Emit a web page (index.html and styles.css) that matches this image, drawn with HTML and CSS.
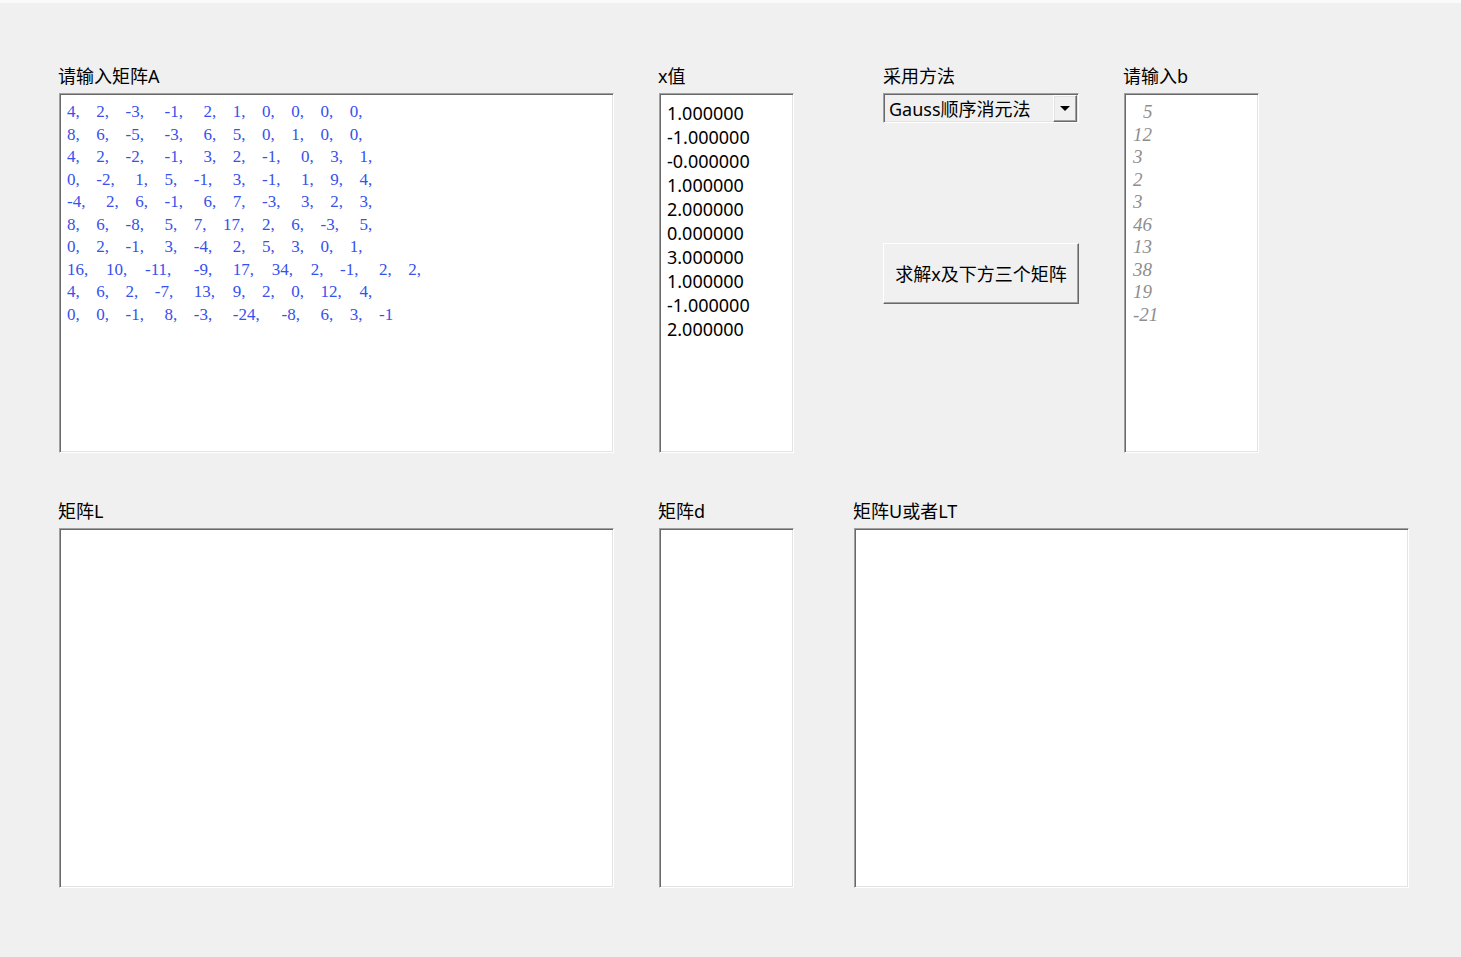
FILE: index.html
```html
<!DOCTYPE html>
<html lang="zh-CN">
<head>
<meta charset="utf-8">
<title>矩阵求解</title>
<link rel="stylesheet" href="styles.css">
</head>
<body>
<div class="row row-top">
  <div class="col col-a">
    <div class="label">请输入矩阵A</div>
    <div class="box box-a mat">
      <div class="mat-row"><span class="t3">4,</span><span class="t3">2,</span><span class="t4">-3,</span><span class="t4">-1,</span><span class="t3">2,</span><span class="t3">1,</span><span class="t3">0,</span><span class="t3">0,</span><span class="t3">0,</span><span class="t3">0,</span></div>
      <div class="mat-row"><span class="t3">8,</span><span class="t3">6,</span><span class="t4">-5,</span><span class="t4">-3,</span><span class="t3">6,</span><span class="t3">5,</span><span class="t3">0,</span><span class="t3">1,</span><span class="t3">0,</span><span class="t3">0,</span></div>
      <div class="mat-row"><span class="t3">4,</span><span class="t3">2,</span><span class="t4">-2,</span><span class="t4">-1,</span><span class="t3">3,</span><span class="t3">2,</span><span class="t4">-1,</span><span class="t3">0,</span><span class="t3">3,</span><span class="t3">1,</span></div>
      <div class="mat-row"><span class="t3">0,</span><span class="t4">-2,</span><span class="t3">1,</span><span class="t3">5,</span><span class="t4">-1,</span><span class="t3">3,</span><span class="t4">-1,</span><span class="t3">1,</span><span class="t3">9,</span><span class="t3">4,</span></div>
      <div class="mat-row"><span class="t4">-4,</span><span class="t3">2,</span><span class="t3">6,</span><span class="t4">-1,</span><span class="t3">6,</span><span class="t3">7,</span><span class="t4">-3,</span><span class="t3">3,</span><span class="t3">2,</span><span class="t3">3,</span></div>
      <div class="mat-row"><span class="t3">8,</span><span class="t3">6,</span><span class="t4">-8,</span><span class="t3">5,</span><span class="t3">7,</span><span class="t4">17,</span><span class="t3">2,</span><span class="t3">6,</span><span class="t4">-3,</span><span class="t3">5,</span></div>
      <div class="mat-row"><span class="t3">0,</span><span class="t3">2,</span><span class="t4">-1,</span><span class="t3">3,</span><span class="t4">-4,</span><span class="t3">2,</span><span class="t3">5,</span><span class="t3">3,</span><span class="t3">0,</span><span class="t3">1,</span></div>
      <div class="mat-row"><span class="t4">16,</span><span class="t4">10,</span><span class="t5">-11,</span><span class="t4">-9,</span><span class="t4">17,</span><span class="t4">34,</span><span class="t3">2,</span><span class="t4">-1,</span><span class="t3">2,</span><span class="t3">2,</span></div>
      <div class="mat-row"><span class="t3">4,</span><span class="t3">6,</span><span class="t3">2,</span><span class="t4">-7,</span><span class="t4">13,</span><span class="t3">9,</span><span class="t3">2,</span><span class="t3">0,</span><span class="t4">12,</span><span class="t3">4,</span></div>
      <div class="mat-row"><span class="t3">0,</span><span class="t3">0,</span><span class="t4">-1,</span><span class="t3">8,</span><span class="t4">-3,</span><span class="t5">-24,</span><span class="t4">-8,</span><span class="t3">6,</span><span class="t3">3,</span><span class="t3">-1</span></div>
    </div>
  </div>
  <div class="col col-x">
    <div class="label">x值</div>
    <div class="box box-narrow xvals">
      <div>1.000000</div>
      <div>-1.000000</div>
      <div>-0.000000</div>
      <div>1.000000</div>
      <div>2.000000</div>
      <div>0.000000</div>
      <div>3.000000</div>
      <div>1.000000</div>
      <div>-1.000000</div>
      <div>2.000000</div>
    </div>
  </div>
  <div class="col col-m">
    <div class="label">采用方法</div>
    <div class="select">
      <span class="select-text">Gauss顺序消元法</span>
      <span class="select-arrow"></span>
    </div>
    <button class="btn" type="button">求解x及下方三个矩阵</button>
  </div>
  <div class="col col-b">
    <div class="label">请输入b</div>
    <div class="box box-narrow bvals">
      <div class="indent">5</div>
      <div>12</div>
      <div>3</div>
      <div>2</div>
      <div>3</div>
      <div>46</div>
      <div>13</div>
      <div>38</div>
      <div>19</div>
      <div>-21</div>
    </div>
  </div>
</div>
<div class="row row-bottom">
  <div class="col col-a">
    <div class="label">矩阵L</div>
    <div class="box box-a"></div>
  </div>
  <div class="col col-x">
    <div class="label">矩阵d</div>
    <div class="box box-narrow"></div>
  </div>
  <div class="col col-u">
    <div class="label">矩阵U或者LT</div>
    <div class="box box-a"></div>
  </div>
</div>
</body>
</html>
```

FILE: styles.css
```css
* {
  box-sizing: border-box;
}

html,
body {
  margin: 0;
}

body {
  width: 1461px;
  height: 957px;
  overflow: hidden;
  background: #f0f0f0;
  border-top: 3px solid #fafafa;
  padding: 61px 0 0 58px;
  font-family: "Noto Sans", "Noto Sans CJK SC", sans-serif;
  color: #000;
}

.row {
  display: flex;
  align-items: flex-start;
}

.row-bottom {
  margin-top: 46px;
}

.col {
  flex-shrink: 0;
}

.col-a {
  width: 556px;
}

.col-x {
  width: 136px;
  margin-left: 44px;
}

.col-m {
  width: 196px;
  margin-left: 89px;
  display: flex;
  flex-direction: column;
}

.col-b {
  width: 136px;
  margin-left: 44px;
}

.col-u {
  width: 556px;
  margin-left: 59px;
}

.label {
  font-size: 18px;
  line-height: 24px;
  height: 24px;
  margin-bottom: 5px;
  white-space: nowrap;
}

.box {
  margin-left: 1px;
  height: 360px;
  background: #fff;
  border: 1px solid;
  border-color: #a0a0a0 #fff #fff #a0a0a0;
  box-shadow: inset 1px 1px 0 #696969, inset -1px -1px 0 #e3e3e3;
  padding: 7px 6px 0 7px;
  overflow: hidden;
}

.box-a {
  width: 555px;
}

.box-narrow {
  width: 135px;
}

.mat {
  font-family: "Liberation Serif", serif;
  font-size: 17px;
  line-height: 22.5px;
  color: #3651ee;
}

.mat-row {
  display: flex;
  white-space: nowrap;
}

.mat-row span {
  flex-shrink: 0;
}

.t3 {
  width: 29.25px;
}

.t4 {
  width: 39px;
}

.t5 {
  width: 48.75px;
}

.xvals {
  font-family: "Noto Sans", sans-serif;
  font-size: 18px;
  line-height: 24px;
  color: #000;
}

.bvals {
  font-family: "Liberation Serif", serif;
  font-style: italic;
  font-size: 19px;
  line-height: 22.5px;
  color: #8e8e8e;
  padding-left: 8px;
}

.indent {
  padding-left: 10px;
}

.select {
  width: 196px;
  height: 30px;
  border: 1px solid;
  border-color: #a0a0a0 #fff #fff #a0a0a0;
  box-shadow: inset 1px 1px 0 #696969, inset -1px -1px 0 #e3e3e3;
  display: flex;
  align-items: center;
  justify-content: space-between;
  padding: 1px 1px 0 5px;
  font-size: 18px;
  line-height: 24px;
  white-space: nowrap;
}

.select-arrow {
  width: 24px;
  height: 27px;
  background: #f0f0f0;
  border: 1px solid;
  border-color: #fff #696969 #696969 #fff;
  box-shadow: inset -1px -1px 0 #a0a0a0, inset 1px 1px 0 #e3e3e3;
  display: flex;
  align-items: center;
  justify-content: center;
}

.select-arrow::after {
  content: "";
  border-left: 5px solid transparent;
  border-right: 5px solid transparent;
  border-top: 5px solid #000;
}

.btn {
  margin-top: 120px;
  width: 196px;
  height: 61px;
  padding: 0;
  background: #f0f0f0;
  border: 1px solid;
  border-color: #fff #696969 #696969 #fff;
  box-shadow: inset -1px -1px 0 #a0a0a0;
  font-family: "Noto Sans", "Noto Sans CJK SC", sans-serif;
  font-size: 18px;
  line-height: 24px;
  color: #000;
  display: flex;
  align-items: center;
  justify-content: center;
  white-space: nowrap;
}
```
